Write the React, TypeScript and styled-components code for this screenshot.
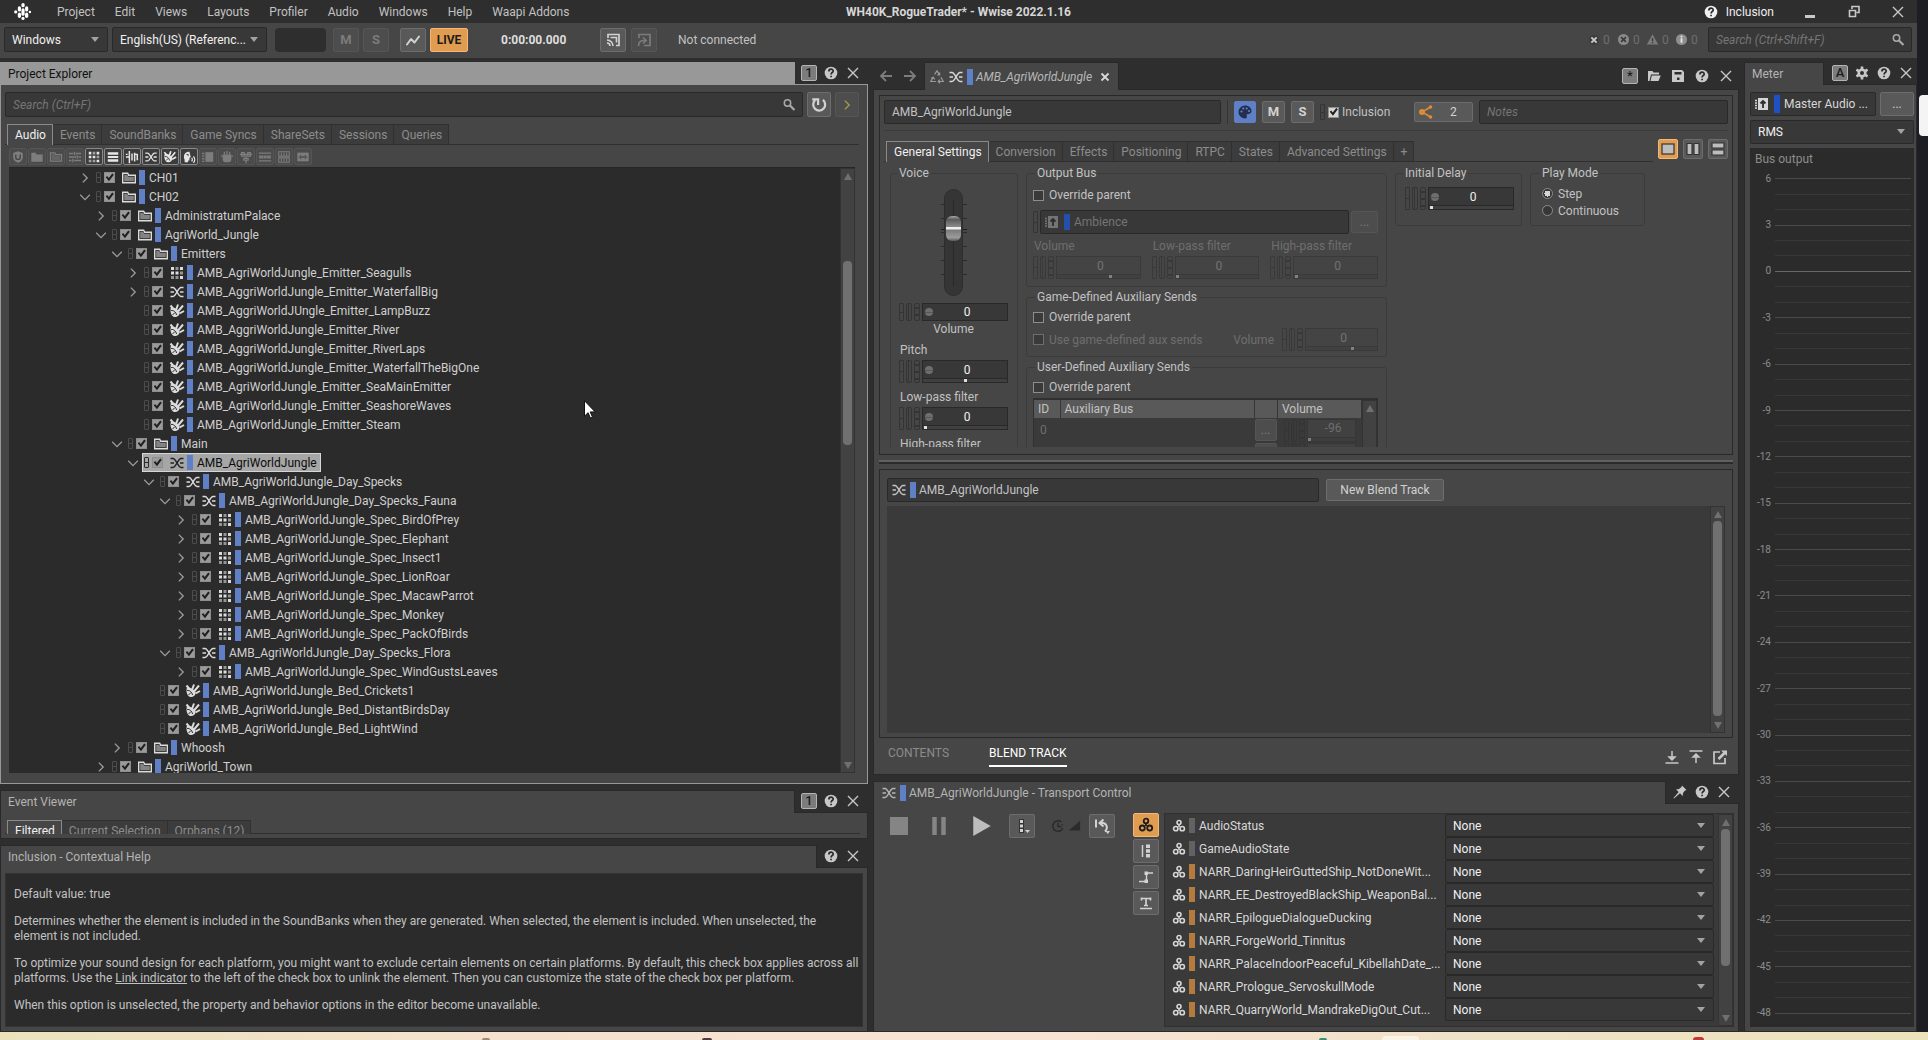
import React from "react";
import styled, { createGlobalStyle, css } from "styled-components";

const c = {
  back: "#2e2e2e",
  panel: "#464646",
  edge: "#292929",
  field: "#383838",
  well: "#2b2b2b",
  tab: "#3c3c3c",
  text: "#c2c2c2",
  bright: "#f0f0f0",
  dim: "#8c8c8c",
  off: "#6e6e6e",
  button: "#595959",
  buttonEdge: "#6d6d6d",
  orange: "#e09c50",
  blue: "#5f80c6",
  focus: "#989898",
};

const Global = createGlobalStyle`
  html, body, #root { height: 100%; }
  body {
    margin: 0;
    overflow: hidden;
    background: ${c.back};
    color: ${c.text};
    font: 12px/16px Roboto, "Open Sans", sans-serif;
  }
  *, *::before, *::after { box-sizing: border-box; }
  button, input, select { font: inherit; color: inherit; margin: 0; border-radius: 0; }
  button { padding: 0; }
  svg { display: block; flex: none; }
`;

/* ---------- icons ---------- */

const line = { fill: "none", stroke: "currentColor", strokeWidth: 1.5 } as const;

const icons: Record<string, React.ReactNode> = {
  logo: (
    <g fill="currentColor">
      <rect x="7" y="0" width="3" height="4" rx="1.5" />
      <rect x="7" y="5" width="3" height="7" rx="1.5" />
      <rect x="7" y="13" width="3" height="3" rx="1.5" />
      <rect x="3.6" y="3" width="3" height="5" rx="1.5" />
      <rect x="3.6" y="9" width="3" height="5" rx="1.5" />
      <rect x="10.4" y="3" width="3" height="5" rx="1.5" />
      <rect x="10.4" y="9" width="3" height="5" rx="1.5" />
      <circle cx="1.6" cy="8.4" r="1.5" />
      <circle cx="15" cy="8.4" r="1.2" />
    </g>
  ),
  help: (
    <>
      <circle cx="8" cy="8" r="6.3" fill="currentColor" />
      <path d="M5.9 6.4c0-3 4.3-3 4.3-.4 0 1.6-2.1 1.5-2.1 3.4M8.1 10.7v1.6" fill="none" stroke="#2a2a2a" strokeWidth="1.7" />
    </>
  ),
  close: <path d="M3 3l10 10M13 3L3 13" {...line} strokeWidth={1.4} />,
  closeSmall: <path d="M4.5 4.5l7 7M11.5 4.5l-7 7" {...line} strokeWidth={1.8} />,
  minimize: <rect x="3" y="11" width="10" height="3" fill="currentColor" />,
  restore: (
    <path d="M6 5V2.5h7v6h-2.5M3.5 6.5h6v6h-6z" {...line} strokeWidth={1.6} />
  ),
  search: (
    <>
      <circle cx="6.5" cy="6" r="3.2" {...line} />
      <path d="M9 8.5l4.5 4.5" {...line} strokeWidth={2.2} />
    </>
  ),
  refresh: (
    <path d="M11.5 3.5a5.3 5.3 0 1 1-7 .3M2 3h5.2v5" {...line} strokeWidth={2} />
  ),
  right: <path d="M5.5 3l5 5-5 5" {...line} strokeWidth={1.6} />,
  down: <path d="M2.5 5.5L8 11l5.5-5.5" {...line} strokeWidth={1.5} />,
  arrowLeft: <path d="M14 8H3M8 3L3 8l5 5" {...line} strokeWidth={1.8} />,
  arrowRight: <path d="M2 8h11M8 3l5 5-5 5" {...line} strokeWidth={1.8} />,
  recycle: (
    <path
      d="M5.6 5.4L8 1.8l2.4 3.6M10.6 3.4v2.4H8.3M12 8.2l2.2 4.3H9.6M11 10.6l-1.8 1.9 1.8 1.9M7 12.5H1.8l2.4-4.2M2.2 9.2l2.2-1 1.2 2.3"
      {...line}
      strokeWidth={1.2}
    />
  ),
  blend: (
    <path
      d="M1.500 3.500h2.500c3 0 5 9 8 9h2.500M1.500 12.500h2.500c3 0 5-9 8-9h2.500M1.500 8h3.500M11 8h3.500"
      {...line}
      strokeWidth={1.500}
    />
  ),
  grid: (
    <g fill="currentColor">
      <path d="M2 2h3v3H2zM11 2h3v3h-3zM2 6.500h3v3H2zM6.500 6.500h3v3h-3zM11 11h3v3h-3z" />
      <path opacity=".6" d="M6.500 2h3v3h-3zM11 6.500h3v3h-3zM2 11h3v3H2zM6.500 11h3v3h-3z" />
    </g>
  ),
  sound: (
    <>
      <path d="M2 4.500c3-.5 6.500 1.500 8.500 4.500.5 3-2 5-5 5C2.500 13.500.5 9 2 4.500z" fill="currentColor" />
      <path d="M7 7l2-5.500M9 8.500l5-6M10.500 10.500l4.500-2.500M1.500 2.500L4 5.500" {...line} strokeWidth={2} />
      <path d="M2 7.500c2.500-.5 5 1.500 5.500 4.500M3.500 12l2.500-2.500" stroke="#2b2b2b" strokeWidth="1" fill="none" />
    </>
  ),
  folder: (
    <>
      <path d="M1.700 3.200h5l1 2h6.600v7.600H1.700z" {...line} strokeWidth={1.400} />
      <path d="M3.200 4.700h3l1 2h5.600v4.600H3.200z" fill="currentColor" opacity=".5" />
    </>
  ),
  folderFull: <path d="M1.500 3h5l1 2h7v8.500h-13z" fill="currentColor" />,
  folderOpen: (
    <path d="M2 13V3h4.500l1 1.600H13v2H5L3.500 13zM5.800 7.600h9L12.500 13h-8z" fill="currentColor" />
  ),
  save: (
    <>
      <path d="M2 2h10l2 2v10H2z" fill="currentColor" />
      <path d="M4.500 4h7v2.500h-7zM7 9.500h2.500V12H7z" fill="#2e2e2e" />
    </>
  ),
  gear: (
    <>
      <circle cx="8" cy="8" r="3.300" {...line} strokeWidth={2.600} />
      <path d="M8 1.500v2.800M8 11.700v2.800M2.400 4.700l2.400 1.400M11.200 9.900l2.400 1.400M2.400 11.300l2.400-1.400M11.200 6.100l2.400-1.400" {...line} strokeWidth={2.600} />
    </>
  ),
  pin: (
    <path d="M10 1.500l4.500 4.500-1.500.5-2 2.500-.3 3L8 9.300 2 14.500 1.500 14 6.700 8 4 5.400l3-.4L9.500 3z" fill="currentColor" />
  ),
  shield: (
    <>
      <path d="M8 1.500l5.500 2v5c0 3-2.500 5-5.500 6-3-1-5.500-3-5.500-6v-5z" fill="currentColor" />
      <path d="M5.500 5v3.500c0 3 5 3 5 0V5" fill="none" stroke="#464646" strokeWidth="1.600" />
    </>
  ),
  mixer: (
    <path d="M1 4h5M9 4h6M1 8h8M12 8h3M1 12h3M7 12h8M7.500 2v4M10.500 6v4M5.500 10v4" {...line} />
  ),
  rows: <path d="M2 2.500h12v3H2zM2 10.500h12v3H2zM2 6.800h12v2.400H2z" fill="currentColor" />,
  switch: (
    <path d="M5 1v14M8 4v8M11 3v10M1 8h4M11 5h3v6h1M1 5h2" {...line} strokeWidth={1.700} />
  ),
  face: (
    <>
      <path d="M3 14V11C.5 6 4 1 8.500 2l1.500 6-1.500 1v3H7v2z" fill="currentColor" />
      <path d="M5 5h2v2" fill="none" stroke="#333" />
      <path d="M11 9c1 1 1 3 0 4M13 7.500c2 2 2 5 0 7" {...line} />
    </>
  ),
  box: (
    <>
      <rect x="5" y="2.500" width="9" height="11" fill="currentColor" />
      <path d="M1 4h3M1 7h3M1 10h3M1 13h3" {...line} />
    </>
  ),
  plug: (
    <>
      <path d="M3 5h10v5c0 2-1 4-3 4H6c-2 0-3-2-3-4z" fill="currentColor" />
      <path d="M5 2v3M8 1v4M11 2v3M1 7h2M13 7h2" {...line} />
    </>
  ),
  duck: <path d="M1 5h14M3 3h3v4H3zM10 3h3v4h-3zM8 5v4M5.500 9.500h5v2h-5zM8 12v3" {...line} />,
  split: <path d="M1 3.500h14M1 12.500h14M2 7h3v2H2zM7 7h2v2H7zM11 7h3v2h-3z" {...line} />,
  dual: <path d="M2 2h12v5H2zM2 9h12v5H2zM5 3v3M8 3v3M11 3v3M5 10v3M8 10v3M11 10v3" {...line} strokeWidth={1.200} />,
  wave: (
    <>
      <rect x="1.500" y="3" width="13" height="10" fill="currentColor" />
      <path d="M3 8h10M5.500 5.500v5M10.500 5.500v5M8 7v2" stroke="#464646" fill="none" />
    </>
  ),
  graph: (
    <path d="M2 12.500L6 7l3.500 3.500L14 4.500" {...line} strokeWidth={2} strokeLinejoin="round" strokeLinecap="round" />
  ),
  cast: (
    <>
      <path d="M3 6V2.500h11v11h-3" {...line} strokeWidth={1.700} />
      <path d="M2 8a6 6 0 0 1 6 6M2 11a3 3 0 0 1 3 3M5.500 5.500h6v5" {...line} strokeWidth={1.600} />
    </>
  ),
  castBack: (
    <>
      <path d="M3 6V2.500h11v11H8" {...line} strokeWidth={1.700} />
      <path d="M2.500 14c0-4 2-6 7-5.500M7 5.500l3.200 3L7 11.500" {...line} strokeWidth={1.600} />
    </>
  ),
  palette: (
    <>
      <path d="M8 1.500c4 0 6.500 2.500 6.500 5.500 0 2-1.500 3-3.500 3-1.500 0-1.500 1-1.200 2 .5 1.500-.3 2.500-1.800 2.500-3.500 0-6.500-3-6.500-6.500S4.500 1.500 8 1.500z" fill="#222f50" />
      <g fill={c.blue}>
        <circle cx="4.500" cy="7.500" r="1.100" />
        <circle cx="6.300" cy="4.500" r="1.100" />
        <circle cx="9.700" cy="4.500" r="1.100" />
        <circle cx="12" cy="7" r="1.100" />
      </g>
    </>
  ),
  share: (
    <>
      <path d="M12.500 3L4 8l8.500 5" fill="none" stroke="#e08a34" strokeWidth="1.500" />
      <circle cx="4" cy="8" r="3" fill="#e08a34" />
      <circle cx="12.500" cy="3" r="1.800" fill="#e08a34" />
      <circle cx="12.500" cy="13" r="1.800" fill="#e08a34" />
    </>
  ),
  bus: (
    <>
      <path d="M4 2h10v12H4z" fill="currentColor" />
      <path d="M1 4.500h2M1 7h2M1 9.500h2M1 12h2" {...line} />
      <path d="M9 12V5M6.500 7.500L9 5l2.500 2.500" fill="none" stroke="#2e2e2e" strokeWidth="1.800" />
    </>
  ),
  toBottom: <path d="M1.500 14h13M8 2v8M5 8l3 3 3-3z" {...line} />,
  toTop: <path d="M1.500 2h13M8 14V6M5 8l3-3 3 3z" {...line} />,
  popOut: (
    <>
      <path d="M8 3H2v11.500h11V9" {...line} strokeWidth={1.700} />
      <path d="M9 1.500h6V7z" fill="currentColor" />
      <path d="M13 3.500L6.500 10" {...line} strokeWidth={2.600} />
    </>
  ),
  state: (
    <g fill="none" stroke="currentColor" strokeWidth="1.800">
      <circle cx="8" cy="4" r="2.300" />
      <circle cx="4.300" cy="11" r="2.500" />
      <circle cx="11.700" cy="11" r="2.500" />
      <path d="M8 6v3" />
    </g>
  ),
  switchGroup: (
    <>
      <path d="M4.500 2v12" {...line} />
      <path d="M8 1.500h4v3.600H8zM8 6.200h4v3.600H8zM8 10.900h4v3.600H8z" fill="currentColor" />
    </>
  ),
  rtpc: (
    <>
      <path d="M1 12.500h7.500V4H15" {...line} strokeWidth={1.400} />
      <path d="M6.500 2.500h3.500V6H6.500zM6.500 10.500h3.500V14H6.500z" fill="currentColor" />
    </>
  ),
  trigger: <path d="M3 3.500h10M8 3v7.500M6 10.500h4M2 13.500h12M3.500 2.500v3M12.500 2.500v3" {...line} strokeWidth={1.700} />,
  stop: <rect x="0" y="0" width="16" height="16" fill="currentColor" />,
  pause: <path d="M2 0h4v16H2zM10 0h4v16h-4z" fill="currentColor" />,
  play: <path d="M1 0l14 8-14 8z" fill="currentColor" />,
  dots: (
    <>
      <path d="M5 1h5v14H5z" fill="#333" />
      <path d="M6 2h3v3H6zM6 6.500h3v3H6zM6 11h3v3H6z" fill="currentColor" />
      <path d="M11 12h5l-2.500 3z" fill="currentColor" />
    </>
  ),
  clock: (
    <path d="M12 3.500a6 6 0 1 0 1.500 7M8 4v4.500h4M10 1v2M13 6v1" {...line} strokeWidth={1.700} />
  ),
  ramp: <path d="M2 13L15 2v11z" fill="currentColor" />,
  undo: (
    <>
      <path d="M2 1.500v8M6 5c6-1 9 4 5 8.500M9.500 1.500L5.500 5l4 3.500" {...line} strokeWidth={2} />
      <path d="M11.500 13h4.500l-2.200 3z" fill="currentColor" />
    </>
  ),
  layout1: <rect x="2" y="3" width="12" height="10" fill="#bdbdbd" stroke="#333" strokeWidth="1.200" />,
  layout2: <path d="M2 2.500h5v11H2zM9 2.500h5v11H9z" fill="#bdbdbd" stroke="#333" strokeWidth="1.200" />,
  layout3: <path d="M2 2h12v5H2zM2 9h12v5H2z" fill="#bdbdbd" stroke="#333" strokeWidth="1.200" />,
  badX: (
    <>
      <circle cx="8" cy="8" r="6.500" fill="#3a3a3a" />
      <path d="M4.500 4.500l7 7M11.500 4.500l-7 7" stroke="#c8c8c8" strokeWidth="2.600" />
    </>
  ),
  errX: (
    <>
      <circle cx="8" cy="8" r="6.800" fill="#8a8a8a" />
      <path d="M5 5l6 6M11 5l-6 6" stroke="#3a3a3a" strokeWidth="2" />
    </>
  ),
  warn: (
    <>
      <path d="M8 1.500l7 12.500H1z" fill="#7a7a7a" />
      <path d="M8 6v4M8 11v1.600" stroke="#3a3a3a" strokeWidth="1.600" />
    </>
  ),
  info: (
    <>
      <circle cx="8" cy="8" r="6.800" fill="#8f8f8f" />
      <path d="M8 3.500v2M8 6.500v5.500" stroke="#e8e8e8" strokeWidth="2.200" />
    </>
  ),
};

const Icon = ({ name, size = 16 }: { name: string; size?: number }) => (
  <svg width={size} height={size} viewBox="0 0 16 16" aria-hidden="true">
    {icons[name]}
  </svg>
);

/* ---------- shared parts ---------- */

const Fill = styled.div`flex: 1;`;

const PlainButton = styled.button`
  display: flex;
  align-items: center;
  justify-content: center;
  width: 16px;
  height: 16px;
  border: 0;
  background: none;
  color: #c8c8c8;
`;

const Badge = styled(PlainButton)`
  border: 1px solid #b4b4b4;
  border-radius: 2px;
  background: #7c7c7c;
  color: #1c1c1c;
  font-size: 13px;
  font-weight: 500;
  line-height: 14px;
`;

const Button = styled.button<{ $w?: number; $h?: number; $tone?: "on" | "off" | "blue" }>`
  display: flex;
  flex: none;
  align-items: center;
  justify-content: center;
  width: ${(p) => (p.$w ? `${p.$w}px` : "auto")};
  height: ${(p) => p.$h ?? 24}px;
  border: 1px solid ${c.buttonEdge};
  border-radius: 2px;
  background: ${c.button};
  color: #d2d2d2;
  ${(p) => p.$tone === "on" && css`
    background: ${c.orange};
    border-color: #f2b878;
    color: #1c1c1c;
    font-weight: 700;
  `}
  ${(p) => p.$tone === "off" && css`
    background: #4d4d4d;
    border-color: #555;
    color: #7b7b7b;
  `}
  ${(p) => p.$tone === "blue" && css`
    background: ${c.blue};
    border-color: ${c.blue};
  `}
`;

const ShareButton = styled(Button)`
  justify-content: flex-start;
  gap: 16px;
  padding-left: 3px;
`;

const Letter = styled.span`
  font-size: 13px;
  font-weight: 700;
`;

const boxed = css`
  border: 1px solid ${c.edge};
  border-radius: 2px;
  background: ${c.field};
`;

const SearchBox = styled.label<{ $w?: number }>`
  ${boxed}
  display: flex;
  flex: ${(p) => (p.$w ? `0 0 ${p.$w}px` : "1")};
  align-items: center;
  height: 25px;
  padding: 0 5px 0 7px;
  color: #a8a8a8;
`;

const Bare = styled.input`
  flex: 1;
  min-width: 0;
  padding: 0;
  border: 0;
  outline: 0;
  background: none;
  &::placeholder { color: #757575; font-style: italic; opacity: 1; }
`;

const TextField = styled.input<{ $w?: number }>`
  ${boxed}
  flex: ${(p) => (p.$w ? `0 0 ${p.$w}px` : "1")};
  min-width: 0;
  height: 24px;
  padding: 0 7px;
  color: ${c.text};
  &::placeholder { color: #757575; font-style: italic; opacity: 1; }
`;

const SelectBox = styled.div<{ $w?: number; $h: number }>`
  position: relative;
  flex: ${(p) => (p.$w ? `0 0 ${p.$w}px` : "1")};
  height: ${(p) => p.$h}px;
  &::after {
    content: "";
    position: absolute;
    right: 9px;
    top: calc(50% - 3px);
    border: 4px solid transparent;
    border-top: 5px solid #a2a2a2;
    border-bottom: 0;
    pointer-events: none;
  }
`;

const Select = styled.select`
  ${boxed}
  appearance: none;
  width: 100%;
  height: 100%;
  padding: 0 7px;
  color: ${c.bright};
`;

const Picker = ({ label, value, w, h = 24, id }: { label?: string; value: string; w?: number; h?: number; id?: string }) => (
  <SelectBox $w={w} $h={h}>
    <Select aria-label={label} id={id}>
      <option>{value}</option>
    </Select>
  </SelectBox>
);

const Tint = styled.i<{ $color?: string; $h?: number }>`
  flex: none;
  width: 6px;
  height: ${(p) => p.$h ?? 16}px;
  background: ${(p) => p.$color ?? c.blue};
`;

const Tabs = styled.div`
  display: flex;
  flex: 1;
  padding-left: 2px;
  border-bottom: 1px solid #2f2f2f;
`;

const Tab = styled.button<{ $on?: boolean }>`
  height: 20px;
  padding: 0 6px 0 7px;
  border: 1px solid #303030;
  border-width: 1px 1px 0 0;
  background: ${c.tab};
  color: ${c.dim};
  ${(p) => p.$on && css`
    position: relative;
    height: 21px;
    margin-bottom: -1px;
    border-color: #8a8a8a;
    border-left-width: 1px;
    background: ${c.panel};
    color: ${c.bright};
  `}
`;

const TabList = ({ names }: { names: string[] }) => (
  <Tabs role="tablist">
    {names.map((n, i) => (
      <Tab key={n} role="tab" $on={i === 0} aria-selected={i === 0}>{n}</Tab>
    ))}
  </Tabs>
);

const ScrollRail = styled.div`
  display: flex;
  flex: 0 0 15px;
  flex-direction: column;
  align-items: center;
  border: 1px solid #333;
  background: #424242;
`;

const ScrollArrow = styled.i<{ $down?: boolean }>`
  flex: none;
  margin: 4px 0 3px;
  border: 4px solid transparent;
  border-top: ${(p) => (p.$down ? "7px solid #707070" : "0")};
  border-bottom: ${(p) => (p.$down ? "0" : "7px solid #707070")};
`;

const ScrollPart = styled.i<{ $grow: number; $thumb?: boolean }>`
  flex: ${(p) => p.$grow} 1 0;
  width: 9px;
  border-radius: 4px;
  background: ${(p) => (p.$thumb ? "#707070" : "transparent")};
`;

const Scroll = ({ before, size, after }: { before: number; size: number; after: number }) => (
  <ScrollRail aria-hidden="true">
    <ScrollArrow />
    <ScrollPart $grow={before} />
    <ScrollPart $grow={size} $thumb={size > 0} />
    <ScrollPart $grow={after} />
    <ScrollArrow $down />
  </ScrollRail>
);

const Check = styled.input.attrs({ type: "checkbox" })<{ $fill?: string }>`
  appearance: none;
  display: grid;
  flex: none;
  place-items: center;
  width: 11px;
  height: 11px;
  border: 1px solid #8d8d8d;
  background: ${(p) => p.$fill ?? "#3a3a3a"};
  &:checked::after {
    content: "";
    width: 9px;
    height: 9px;
    background: #1f1f1f;
    clip-path: polygon(8% 48%, 24% 34%, 42% 56%, 80% 6%, 98% 20%, 44% 92%);
  }
  &:disabled { border-color: #6d6d6d; }
`;

const Radio = styled.input.attrs({ type: "radio" })`
  appearance: none;
  width: 11px;
  height: 11px;
  border: 1px solid #8d8d8d;
  border-radius: 50%;
  background: #363636;
  &:checked { background: radial-gradient(circle, #d4d4d4 0 3px, #363636 3px); }
`;

const CheckLabel = styled.label<{ $off?: boolean }>`
  display: flex;
  align-items: center;
  gap: 5px;
  color: ${(p) => (p.$off ? c.off : c.text)};
`;

const LinkMark = styled.i<{ $h?: number; $color?: string }>`
  --mark: ${(p) => p.$color ?? "#343434"};
  flex: none;
  width: 5px;
  height: ${(p) => p.$h ?? 11}px;
  border: 1px solid var(--mark);
  border-radius: 1px;
  background: linear-gradient(var(--mark), var(--mark)) center / 100% 1px no-repeat;
`;

/* ---------- panel frame ---------- */

const Panel = styled.section<{ $grow?: boolean; $h?: number }>`
  display: flex;
  flex: ${(p) => (p.$grow ? "1 1 0" : `0 0 ${p.$h}px`)};
  flex-direction: column;
  min-height: 0;
  min-width: 0;
`;

const PanelHead = styled.header<{ $h?: number }>`
  display: flex;
  flex: 0 0 ${(p) => p.$h ?? 22}px;
`;

const PanelTitle = styled.h2<{ $focus?: boolean; $narrow?: boolean }>`
  position: relative;
  display: flex;
  flex: ${(p) => (p.$narrow ? "0 0 80px" : "1")};
  align-items: center;
  gap: 3px;
  margin: 0 0 -1px;
  padding: 0 7px;
  border: 1px solid ${(p) => (p.$focus ? c.focus : c.edge)};
  border-bottom: 0;
  background: ${(p) => (p.$focus ? c.focus : c.panel)};
  color: ${(p) => (p.$focus ? "#111" : "#b4b4b4")};
  font-size: 12px;
  font-weight: 400;
`;

const HeadTools = styled.div<{ $gap?: number; $right?: number }>`
  display: flex;
  align-items: center;
  gap: ${(p) => p.$gap ?? 6}px;
  padding: 0 ${(p) => p.$right ?? 7}px 0 6px;
`;

const PanelBody = styled.div<{ $focus?: boolean; $pad: string }>`
  display: flex;
  flex: 1;
  flex-direction: column;
  min-height: 0;
  padding: ${(p) => p.$pad};
  border: 1px solid ${(p) => (p.$focus ? c.focus : c.edge)};
  background: ${c.panel};
`;

const HeadButton = ({ name, label }: { name: string; label: string }) => (
  <PlainButton aria-label={label}><Icon name={name} /></PlainButton>
);

/* ---------- window chrome ---------- */

const Screen = styled.div`
  display: grid;
  grid-template: minmax(0, 1fr) 8px / minmax(0, 1fr) 11px;
  height: 100vh;
`;

const AppWindow = styled.div`
  display: flex;
  flex-direction: column;
  min-height: 0;
  background: ${c.back};
`;

const Behind = styled.div`
  padding: 95px 0 0 2px;
  background: #1c1e24;
`;

const BehindThumb = styled.div`
  height: 41px;
  border-radius: 4px 0 0 4px;
  background: #f4f4f4;
`;

const Taskbar = styled.div`
  position: relative;
  grid-column: 1 / -1;
  background: linear-gradient(90deg, #ebe2bc, #f7e1cf 30%, #f8e2d3 55%, #f0e2c8 75%, #ece2bb);
`;

const TaskTip = styled.i<{ $x: number; $w: number; $color: string; $h: number }>`
  position: absolute;
  bottom: 0;
  left: ${(p) => p.$x}%;
  width: ${(p) => p.$w}px;
  height: ${(p) => p.$h}px;
  border-radius: 3px 3px 0 0;
  background: ${(p) => p.$color};
`;

const MenuBar = styled.div`
  display: grid;
  grid-template-columns: 1fr auto 1fr;
  align-items: center;
  flex: 0 0 23px;
`;

const MenuItems = styled.nav`
  display: flex;
  align-items: center;
  padding-left: 14px;
  color: #fff;
`;

const MenuGap = styled.i`width: 16px;`;

const MenuButton = styled.button`
  padding: 0 10px;
  border: 0;
  background: none;
  color: ${c.text};
`;

const WindowTitle = styled.h1`
  margin: 0;
  color: #d6d6d6;
  font-size: 12px;
  font-weight: 700;
`;

const WindowTools = styled.div`
  display: flex;
  align-items: center;
  justify-content: flex-end;
  gap: 28px;
  padding-right: 11px;
`;

const ContextHelp = styled.span`
  display: flex;
  align-items: center;
  gap: 7px;
  color: ${c.bright};
`;

const ToolBar = styled.div`
  display: flex;
  align-items: flex-start;
  flex: 0 0 35px;
  padding: 4px 5px 0 4px;
  margin-bottom: 4px;
  background: ${c.panel};
`;

const Group = styled.div<{ $gap?: number; $left?: number }>`
  display: flex;
  flex: none;
  gap: ${(p) => p.$gap ?? 4}px;
  margin-left: ${(p) => p.$left ?? 0}px;
  align-items: center;
  min-height: 25px;
`;

const Blank = styled.div`
  width: 51px;
  height: 24px;
  border-radius: 4px;
  background: ${c.back};
`;

const Clock = styled.time`
  width: 68px;
  color: #dedede;
  font-weight: 700;
`;

const Count = styled.span`
  display: flex;
  align-items: center;
  gap: 3px;
  width: 29px;
  color: ${c.off};
`;

const Main = styled.main`
  display: grid;
  flex: 1;
  grid-template-columns: minmax(0, 868fr) minmax(0, 866fr) 173px;
  gap: 5px;
  min-height: 0;
`;

const Column = styled.div`
  display: flex;
  flex-direction: column;
  gap: 6px;
  min-width: 0;
  min-height: 0;
`;

/* ---------- project explorer ---------- */

const SearchRow = styled.div`
  display: flex;
  gap: 4px;
  margin-bottom: 7px;
`;

const FixedRow = styled.div<{ $h: number }>`
  display: flex;
  flex: 0 0 ${(p) => p.$h}px;
  overflow: hidden;
`;

const ToolIcons = styled.div`
  display: flex;
  flex: none;
  gap: 1px;
  padding: 3px 0 2px 4px;
`;

const ToolIcon = styled.button<{ $on: boolean }>`
  display: grid;
  place-items: center;
  width: 18px;
  height: 17px;
  border: 1px solid ${(p) => (p.$on ? "#8a8a8a" : "#555")};
  border-radius: 2px;
  background: ${(p) => (p.$on ? "#3c3c3c" : "#4b4b4b")};
  color: ${(p) => (p.$on ? "#e6e6e6" : "#7d7d7d")};
`;

const TreeFrame = styled.div`
  display: flex;
  flex: 1;
  min-height: 0;
  margin: 0 4px;
  border-top: 1px solid #262626;
  background: ${c.well};
  overflow: hidden;
`;

const Tree = styled.div`
  flex: 1;
  min-width: 0;
`;

const TreeRow = styled.div<{ $level: number }>`
  display: flex;
  align-items: center;
  height: 19px;
  padding-left: ${(p) => 68 + p.$level * 16}px;
`;

const Expander = styled.button`
  display: grid;
  place-items: center;
  width: 16px;
  height: 16px;
  border: 0;
  background: none;
  color: #9a9a9a;
`;

const NodeLabel = styled.label<{ $on?: boolean }>`
  display: flex;
  align-items: center;
  height: 19px;
  margin-left: 1px;
  padding: 0 3px 0 1px;
  border: 1px solid transparent;
  color: #cfcfcf;
  ${(p) => p.$on && css`
    border-color: #d6d6d6;
    background: #a6a6a6;
    color: #0c0c0c;
  `}
`;

const NodeCheck = styled(Check)`
  margin: 0 6px 0 3px;
  background: #9a9a9a;
`;

const NodeIcon = styled.span<{ $on?: boolean }>`
  margin-right: 2px;
  color: ${(p) => (p.$on ? "#222" : "#dcdcdc")};
`;

const NodeText = styled.span`margin-left: 4px; white-space: nowrap;`;

const Olive = styled.span`color: #a8984a;`;

type Node = [level: number, icon: string, text: string, open?: "open" | "shut"];

const P = "AMB_AgriWorldJungle";
const G = "AMB_AggriWorldJungle_Emitter_";

const nodes: Node[] = [
  [0, "folder", "CH01", "shut"],
  [0, "folder", "CH02", "open"],
  [1, "folder", "AdministratumPalace", "shut"],
  [1, "folder", "AgriWorld_Jungle", "open"],
  [2, "folder", "Emitters", "open"],
  [3, "grid", `${P}_Emitter_Seagulls`, "shut"],
  [3, "blend", `${G}WaterfallBig`, "shut"],
  [3, "sound", "AMB_AggriWorldJUngle_Emitter_LampBuzz"],
  [3, "sound", `${G}River`],
  [3, "sound", `${G}RiverLaps`],
  [3, "sound", `${G}WaterfallTheBigOne`],
  [3, "sound", `${P}_Emitter_SeaMainEmitter`],
  [3, "sound", `${P}_Emitter_SeashoreWaves`],
  [3, "sound", `${P}_Emitter_Steam`],
  [2, "folder", "Main", "open"],
  [3, "blend", P, "open"],
  [4, "blend", `${P}_Day_Specks`, "open"],
  [5, "blend", `${P}_Day_Specks_Fauna`, "open"],
  [6, "grid", `${P}_Spec_BirdOfPrey`, "shut"],
  [6, "grid", `${P}_Spec_Elephant`, "shut"],
  [6, "grid", `${P}_Spec_Insect1`, "shut"],
  [6, "grid", `${P}_Spec_LionRoar`, "shut"],
  [6, "grid", `${P}_Spec_MacawParrot`, "shut"],
  [6, "grid", `${P}_Spec_Monkey`, "shut"],
  [6, "grid", `${P}_Spec_PackOfBirds`, "shut"],
  [5, "blend", `${P}_Day_Specks_Flora`, "open"],
  [6, "grid", `${P}_Spec_WindGustsLeaves`, "shut"],
  [4, "sound", `${P}_Bed_Crickets1`],
  [4, "sound", `${P}_Bed_DistantBirdsDay`],
  [4, "sound", `${P}_Bed_LightWind`],
  [2, "folder", "Whoosh", "shut"],
  [1, "folder", "AgriWorld_Town", "shut"],
];

const toolIcons: [string, boolean][] = [
  ["shield", false], ["folderFull", false], ["folder", false], ["mixer", false],
  ["grid", true], ["rows", true], ["switch", true], ["blend", true], ["sound", true], ["face", true],
  ["box", false], ["plug", false], ["duck", false], ["split", false], ["dual", false], ["wave", false],
];

const Explorer = () => (
  <Panel $grow>
    <PanelHead>
      <PanelTitle $focus>Project Explorer</PanelTitle>
      <HeadTools>
        <Badge>1</Badge>
        <HeadButton name="help" label="Help" />
        <HeadButton name="close" label="Close" />
      </HeadTools>
    </PanelHead>
    <PanelBody $focus $pad="7px 8px 10px 4px">
      <SearchRow>
        <SearchBox>
          <Bare placeholder="Search (Ctrl+F)" aria-label="Search project" />
          <Icon name="search" />
        </SearchBox>
        <Button $w={24} $h={25} aria-label="Refresh"><Icon name="refresh" size={18} /></Button>
        <Button $w={24} $h={25} $tone="off" aria-label="Go">
          <Olive><Icon name="right" size={14} /></Olive>
        </Button>
      </SearchRow>
      <FixedRow $h={21}>
        <TabList names={["Audio", "Events", "SoundBanks", "Game Syncs", "ShareSets", "Sessions", "Queries"]} />
      </FixedRow>
      <ToolIcons>
        {toolIcons.map(([name, on]) => (
          <ToolIcon key={name} $on={on} aria-label={name}><Icon name={name} size={14} /></ToolIcon>
        ))}
      </ToolIcons>
      <TreeFrame>
        <Tree role="tree">
          {nodes.map(([level, icon, text, open]) => {
            const on = text === P;
            return (
              <TreeRow key={text} role="treeitem" aria-selected={on} $level={level}>
                <Expander as={open ? "button" : "span"} aria-label={open && (open === "open" ? "Collapse" : "Expand")}>
                  {open && <Icon name={open === "open" ? "down" : "right"} size={14} />}
                </Expander>
                <NodeLabel $on={on}>
                  <LinkMark $color={on ? "#2b2b2b" : "#4c4c4c"} />
                  <NodeCheck defaultChecked />
                  <NodeIcon $on={on}><Icon name={icon} /></NodeIcon>
                  <Tint $h={15} />
                  <NodeText>{text}</NodeText>
                </NodeLabel>
              </TreeRow>
            );
          })}
        </Tree>
        <Scroll before={78} size={184} after={314} />
      </TreeFrame>
    </PanelBody>
  </Panel>
);

const HelpText = styled.div`
  flex: 1;
  padding: 13px 0 0 8px;
  border: 1px solid #333;
  background: ${c.well};
  line-height: 15px;
  p { margin: 0 0 12px; }
  p:last-child { margin-bottom: 0; }
  a { color: inherit; }
`;

const EventViewer = () => (
  <Panel $h={49}>
    <PanelHead>
      <PanelTitle>Event Viewer</PanelTitle>
      <HeadTools>
        <Badge>1</Badge>
        <HeadButton name="help" label="Help" />
        <HeadButton name="close" label="Close" />
      </HeadTools>
    </PanelHead>
    <PanelBody $pad="7px 7px 0 4px">
      <FixedRow $h={14}>
        <TabList names={["Filtered", "Current Selection", "Orphans (12)"]} />
      </FixedRow>
    </PanelBody>
  </Panel>
);

const Contextual = () => (
  <Panel $h={187}>
    <PanelHead>
      <PanelTitle>Inclusion - Contextual Help</PanelTitle>
      <HeadTools>
        <HeadButton name="help" label="Help" />
        <HeadButton name="close" label="Close" />
      </HeadTools>
    </PanelHead>
    <PanelBody $pad="5px 4px 4px">
      <HelpText>
        <p>Default value: true</p>
        <p>
          Determines whether the element is included in the SoundBanks when they are generated. When selected, the
          element is included. When unselected, the element is not included.
        </p>
        <p>
          To optimize your sound design for each platform, you might want to exclude certain elements on certain
          platforms. By default, this check box applies across all platforms. Use the <a href="#link">Link indicator</a>{" "}
          to the left of the check box to unlink the element. Then you can customize the state of the check box per
          platform.
        </p>
        <p>When this option is unselected, the property and behavior options in the editor become unavailable.</p>
      </HelpText>
    </PanelBody>
  </Panel>
);

/* ---------- property editor ---------- */

const Nav = styled.div`
  display: flex;
  align-items: center;
  gap: 8px;
  width: 51px;
  padding-left: 5px;
  & > button { color: #7c7c7c; }
`;

const DocTab = styled.div`
  position: relative;
  display: flex;
  align-items: center;
  gap: 3px;
  margin-bottom: -1px;
  padding: 0 5px 0 4px;
  border: 1px solid ${c.edge};
  border-bottom: 0;
  background: ${c.panel};
  color: #d8d8d8;
  svg:first-child { color: #9a9a9a; }
  button svg:first-child { color: #d8d8d8; }
  em { color: #b8b8b8; margin-right: 2px; }
`;

const Framed = styled.div<{ $grow?: boolean; $h?: number; $pad: string }>`
  display: flex;
  flex: ${(p) => (p.$grow ? "1 1 0" : `0 0 ${p.$h}px`)};
  flex-direction: column;
  min-height: 0;
  padding: ${(p) => p.$pad};
  border: 1px solid ${c.edge};
  overflow: hidden;
`;

const NameRow = styled.div`
  display: flex;
  align-items: center;
  gap: 6px;
  padding-bottom: 6px;
  border-bottom: 1px solid #3a3a3a;
`;

const Rule = styled.i`
  width: 1px;
  height: 24px;
  background: #343434;
`;

const InclusionGroup = styled.label`
  display: flex;
  align-items: center;
  gap: 3px;
  width: 88px;
`;

const TabRow = styled.div`
  display: flex;
  align-items: flex-end;
  flex: 0 0 21px;
  gap: 5px;
  margin: 10px 0 3px;
`;

const ViewButtons = styled.div`
  display: flex;
  gap: 5px;
  align-self: flex-start;
  margin-top: -2px;
`;

const Properties = styled.div`
  display: flex;
  flex: 1;
  align-items: flex-start;
  gap: 8px;
  min-height: 0;
  padding-left: 6px;
  overflow: hidden;
`;

const Box = styled.fieldset<{ $w?: number; $pad?: string }>`
  flex: none;
  min-width: 0;
  width: ${(p) => (p.$w ? `${p.$w}px` : "auto")};
  margin: 0;
  padding: ${(p) => p.$pad ?? "4px 8px 5px 6px"};
  border: 1px solid #3b3b3b;
  border-radius: 3px;
  legend { margin-left: -2px; padding: 0 2px; }
`;

const Stack = styled.div`
  display: flex;
  flex: 0 0 361px;
  flex-direction: column;
  gap: 2px;
  legend { margin-left: 2px; }
`;

const Pip = styled.i<{ $kind: "rtpc" | "state" }>`
  flex: none;
  width: 6px;
  border: 1px solid #343434;
  border-radius: 2px;
  background: ${(p) =>
    p.$kind === "rtpc"
      ? "linear-gradient(90deg, transparent 1px, #343434 1px 2px, transparent 2px)"
      : "repeating-linear-gradient(transparent 0 3px, #343434 3px 5px, transparent 5px 7px)"};
`;

const SpinRow = styled.div<{ $off?: boolean; $h: number }>`
  display: flex;
  align-items: stretch;
  gap: 2px;
  flex: 1;
  min-width: 0;
  height: ${(p) => p.$h}px;
  opacity: ${(p) => (p.$off ? 0.7 : 1)};
`;

const SpinBox = styled.div<{ $off?: boolean }>`
  display: flex;
  flex: 1;
  flex-direction: column;
  min-width: 0;
  border: 1px solid ${(p) => (p.$off ? "#363636" : c.edge)};
  background: ${(p) => (p.$off ? "#444" : c.field)};
`;

const SpinValue = styled.div`
  display: flex;
  flex: 1;
  align-items: center;
  padding-left: 2px;
`;

const Knob = styled.i<{ $hidden?: boolean }>`
  width: 8px;
  height: 8px;
  border-radius: 50%;
  background: ${(p) => (p.$hidden ? "transparent" : "linear-gradient(#6e6e6e 45%, #585858 45% 60%, #6e6e6e 60%)")};
`;

const SpinInput = styled.input<{ $off?: boolean }>`
  flex: 1;
  min-width: 0;
  height: 16px;
  padding: 0 6px 0 0;
  border: 0;
  outline: 0;
  background: none;
  color: ${(p) => (p.$off ? "#858585" : c.bright)};
  text-align: center;
`;

const SpinTrack = styled.div<{ $off?: boolean }>`
  display: flex;
  height: 4px;
  border-top: 1px solid ${(p) => (p.$off ? "#363636" : c.edge)};
  background: #404040;
`;

const SpinMark = styled.i<{ $off?: boolean }>`
  width: 3px;
  height: 3px;
  background: ${(p) => (p.$off ? "#9a9a9a" : "#e0e0e0")};
`;

const Spin = ({ label, at, off, value = "0" }: { label: string; at?: number; off?: boolean; value?: string }) => (
  <SpinRow $off={off} $h={at === undefined ? 18 : 23}>
    <LinkMark $h={at === undefined ? 18 : 23} />
    <Pip $kind="rtpc" />
    <Pip $kind="state" />
    <SpinBox $off={off}>
      <SpinValue>
        <Knob $hidden={off} />
        <SpinInput $off={off} aria-label={label} defaultValue={value} disabled={off} />
      </SpinValue>
      {at !== undefined && (
        <SpinTrack $off={off}>
          <SpinMark $off={off} style={{ marginLeft: `${at}%` }} />
        </SpinTrack>
      )}
    </SpinBox>
  </SpinRow>
);

const Caption = styled.div<{ $off?: boolean; $center?: boolean }>`
  color: ${(p) => (p.$off ? c.off : c.text)};
  text-align: ${(p) => (p.$center ? "center" : "left")};
`;

const Named = styled.div<{ $top?: number }>`
  display: flex;
  flex-direction: column;
  gap: 2px;
  margin-top: ${(p) => p.$top ?? 4}px;
  & > :first-child { padding-left: 1px; }
  & > :last-child { flex: none; }
`;

const FaderArea = styled.div`
  display: flex;
  justify-content: center;
  margin: 3px 0 7px;
`;

const Fader = styled.div`
  display: flex;
  justify-content: center;
  width: 26px;
  height: 107px;
  background:
    linear-gradient(#1c1c1c, #1c1c1c) 0 40px / 26px 1px no-repeat,
    repeating-linear-gradient(transparent 0 13px, #2b2b2b 13px 14px) 0 2px / 26px 93px no-repeat;
`;

const FaderInput = styled.input.attrs({ type: "range" })`
  appearance: none;
  writing-mode: vertical-lr;
  direction: rtl;
  width: 19px;
  height: 107px;
  border: 1px solid #2d2d2d;
  border-radius: 10px;
  background: linear-gradient(#292929, #292929) center / 1px 86px no-repeat, #353535;
  &::-webkit-slider-thumb {
    appearance: none;
    width: 15px;
    height: 25px;
    border-radius: 6px;
    background: linear-gradient(#a6a6a6, #5c5c5c 14%, #8c8c8c 44%, #efefef 46% 53%, #7a7a7a 55%, #9b9b9b 86%, #585858);
  }
`;

const Line = styled.div<{ $top?: number; $gap?: number }>`
  display: flex;
  align-items: center;
  gap: ${(p) => p.$gap ?? 2}px;
  margin-top: ${(p) => p.$top ?? 0}px;
`;

const BusField = styled.div<{ $off?: boolean }>`
  ${boxed}
  display: flex;
  flex: 1;
  align-items: center;
  gap: 4px;
  min-width: 0;
  height: 24px;
  padding: 0 3px;
  white-space: nowrap;
  color: ${(p) => (p.$off ? "#747474" : "#d6d6d6")};
`;

const Filters = styled.div`
  display: grid;
  grid-template-columns: repeat(3, minmax(0, 1fr));
  gap: 11px;
`;

const NarrowSpin = styled.div`
  display: flex;
  flex: none;
  width: 96px;
  margin-left: 6px;
`;

const AuxFrame = styled.div`
  display: flex;
  height: 80px;
  margin-top: 3px;
  border: 1px solid #303030;
  border-top-width: 2px;
`;

const AuxView = styled.div`
  flex: 1;
  min-width: 0;
  background: #3a3a3a;
`;

const AuxTable = styled.table`
  width: 100%;
  border-collapse: collapse;
  table-layout: fixed;
  th {
    height: 18px;
    padding: 0 4px;
    border-right: 1px solid #363636;
    background: ${c.button};
    font-weight: 400;
    text-align: left;
    white-space: nowrap;
  }
  td {
    height: 24px;
    padding: 0 6px;
    color: ${c.off};
  }
  td.tight { padding: 0; }
`;

const RadioLabel = styled(CheckLabel)`height: 17px;`;

const Splitter = styled.hr`
  flex: none;
  height: 4px;
  margin: 5px 0;
  border: 0;
  border-top: 2px solid #606060;
  border-bottom: 2px solid #2b2b2b;
`;

const BlendCanvas = styled.div`
  display: flex;
  flex: 1;
  justify-content: flex-end;
  margin: 4px 4px 0 0;
  background: #3a3a3a;
`;

const BlendName = styled(BusField)`
  flex: 0 1 432px;
  gap: 3px;
  color: ${c.text};
`;

const SubTabs = styled.div`
  display: flex;
  align-items: flex-start;
  flex: 0 0 36px;
  padding: 5px 5px 0 9px;
`;

const SubTab = styled.button<{ $on?: boolean }>`
  height: 24px;
  margin-right: 40px;
  padding: 0 0 3px;
  border: 0;
  border-bottom: 2px solid ${(p) => (p.$on ? "#fff" : "transparent")};
  background: none;
  color: ${(p) => (p.$on ? "#fff" : c.dim)};
`;

const SubTools = styled.div`
  display: flex;
  gap: 8px;
  padding-top: 6px;
`;

const Editor = () => (
  <Panel $grow>
    <PanelHead $h={27}>
      <Nav>
        <HeadButton name="arrowLeft" label="Back" />
        <HeadButton name="arrowRight" label="Forward" />
      </Nav>
      <DocTab>
        <Icon name="recycle" />
        <Icon name="blend" />
        <Tint />
        <em>{P}</em>
        <HeadButton name="closeSmall" label="Close tab" />
      </DocTab>
      <Fill />
      <HeadTools $gap={8} $right={5}>
        <Badge>*</Badge>
        <HeadButton name="folderOpen" label="Open" />
        <HeadButton name="save" label="Save" />
        <HeadButton name="help" label="Help" />
        <HeadButton name="close" label="Close" />
      </HeadTools>
    </PanelHead>
    <PanelBody $pad="5px 5px 0">
      <Framed $h={360} $pad="4px 4px 7px 4px">
        <NameRow>
          <TextField defaultValue={P} aria-label="Name" />
          <Rule />
          <Button $w={22} $h={22} $tone="blue" aria-label="Colour"><Icon name="palette" /></Button>
          <Button $w={23} $h={22}><Letter>M</Letter></Button>
          <Button $w={23} $h={22}><Letter>S</Letter></Button>
          <InclusionGroup>
            <LinkMark $h={16} />
            <Check defaultChecked $fill="#d6d6d6" />
            Inclusion
          </InclusionGroup>
          <ShareButton $w={59} $h={20}><Icon name="share" />2</ShareButton>
          <TextField $w={249} placeholder="Notes" aria-label="Notes" />
        </NameRow>
        <TabRow>
          <TabList names={["General Settings", "Conversion", "Effects", "Positioning", "RTPC", "States", "Advanced Settings", "+"]} />
          <ViewButtons>
            <Button $w={20} $h={20} $tone="on" aria-label="Single view"><Icon name="layout1" /></Button>
            <Button $w={20} $h={20} aria-label="Two columns"><Icon name="layout2" /></Button>
            <Button $w={20} $h={20} aria-label="Two rows"><Icon name="layout3" /></Button>
          </ViewButtons>
        </TabRow>
        <Properties>
          <Box $w={128} $pad="5px 9px 6px 8px">
            <legend>Voice</legend>
            <FaderArea>
              <Fader><FaderInput defaultValue={67} aria-label="Voice volume fader" /></Fader>
            </FaderArea>
            <Line><Spin label="Voice volume" /></Line>
            <Caption $center>Volume</Caption>
            <Named $top={5}><Caption>Pitch</Caption><Spin label="Pitch" at={49} /></Named>
            <Named $top={6}><Caption>Low-pass filter</Caption><Spin label="Voice low-pass" at={1} /></Named>
            <Named $top={6}><Caption>High-pass filter</Caption><Spin label="Voice high-pass" at={1} /></Named>
          </Box>
          <Stack>
            <Box $pad="6px 8px 7px 6px">
              <legend>Output Bus</legend>
              <CheckLabel><Check />Override parent</CheckLabel>
              <Line $top={7}>
                <LinkMark $h={22} />
                <BusField $off>
                  <Icon name="bus" /><Tint $color="#2450ac" />Ambience
                </BusField>
                <Button $w={27} $h={22} $tone="off">...</Button>
              </Line>
              <Filters>
                <Named><Caption $off>Volume</Caption><Spin off label="Bus volume" at={63} /></Named>
                <Named><Caption $off>Low-pass filter</Caption><Spin off label="Bus low-pass" at={1} /></Named>
                <Named><Caption $off>High-pass filter</Caption><Spin off label="Bus high-pass" at={1} /></Named>
              </Filters>
            </Box>
            <Box>
              <legend>Game-Defined Auxiliary Sends</legend>
              <CheckLabel><Check />Override parent</CheckLabel>
              <Line $top={3}>
                <CheckLabel $off><Check disabled />Use game-defined aux sends</CheckLabel>
                <Fill />
                <Caption $off>Volume</Caption>
                <NarrowSpin><Spin off label="Aux volume" at={63} /></NarrowSpin>
              </Line>
            </Box>
            <Box>
              <legend>User-Defined Auxiliary Sends</legend>
              <CheckLabel><Check />Override parent</CheckLabel>
              <AuxFrame>
                <AuxView>
                  <AuxTable>
                    <colgroup>
                      <col width="26" /><col /><col width="23" /><col width="84" />
                    </colgroup>
                    <thead><tr><th>ID</th><th>Auxiliary Bus</th><th /><th>Volume</th></tr></thead>
                    <tbody>
                      {[0, 1].map((id) => (
                        <tr key={id}>
                          <td>{id}</td>
                          <td />
                          <td className="tight"><Button $w={22} $h={22} $tone="off">...</Button></td>
                          <td><Spin off label={`Send ${id}`} at={1} value="-96" /></td>
                        </tr>
                      ))}
                    </tbody>
                  </AuxTable>
                </AuxView>
                <Scroll before={1} size={0} after={1} />
              </AuxFrame>
            </Box>
          </Stack>
          <Box $w={127} $pad="6px 7px 15px 9px">
            <legend>Initial Delay</legend>
            <Line><Spin label="Initial delay" at={1} /></Line>
          </Box>
          <Box $w={115} $pad="4px 8px 6px 11px">
            <legend>Play Mode</legend>
            <RadioLabel><Radio name="mode" defaultChecked />Step</RadioLabel>
            <RadioLabel><Radio name="mode" />Continuous</RadioLabel>
          </Box>
        </Properties>
      </Framed>
      <Splitter />
      <Framed $grow $pad="8px 3px 4px 7px">
        <Line $gap={7}>
          <BlendName>
            <Icon name="blend" /><Tint />
            <Bare defaultValue={P} aria-label="Blend container" />
          </BlendName>
          <Button $w={118} $h={22}>New Blend Track</Button>
        </Line>
        <BlendCanvas><Scroll before={0} size={194} after={2} /></BlendCanvas>
      </Framed>
      <SubTabs>
        <SubTab>CONTENTS</SubTab>
        <SubTab $on>BLEND TRACK</SubTab>
        <Fill />
        <SubTools>
          <HeadButton name="toBottom" label="Dock below" />
          <HeadButton name="toTop" label="Dock above" />
          <HeadButton name="popOut" label="Float" />
        </SubTools>
      </SubTabs>
    </PanelBody>
  </Panel>
);

/* ---------- transport ---------- */

const TransportGrid = styled.div`
  display: grid;
  flex: 1;
  grid-template-columns: 250px 26px minmax(0, 1fr);
  gap: 5px;
  min-height: 0;
`;

const Controls = styled.div`
  display: flex;
  align-items: center;
  height: 26px;
  padding-left: 12px;
`;

const Ctl = styled(PlainButton)<{ $right: number; $tone?: string }>`
  width: 18px;
  height: 18px;
  margin-right: ${(p) => p.$right}px;
  color: ${(p) => p.$tone ?? "#858585"};
`;

const Dark = styled.span`
  display: flex;
  align-items: center;
  gap: 2px;
  margin: 0 8px 0 16px;
  color: #2b2b2b;
`;

const SideTabs = styled.div`
  display: flex;
  flex-direction: column;
  gap: 2px;
`;

const StateFrame = styled.div`
  display: flex;
  min-height: 0;
  border: 1px solid #303030;
  background: #3a3a3a;
  overflow: hidden;
`;

const StateList = styled.ul`
  flex: 1;
  min-width: 0;
  margin: 0;
  padding: 0 4px 0 7px;
  list-style: none;
`;

const StateRow = styled.li`
  display: flex;
  align-items: center;
  height: 23px;
  color: #d8d8d8;
`;

const StateName = styled.label`
  display: flex;
  flex: 0 0 273px;
  align-items: center;
  gap: 3px;
  overflow: hidden;
  white-space: nowrap;
  ${Tint} { margin-right: 1px; }
`;

const states: [string, boolean][] = [
  ["AudioStatus", false],
  ["GameAudioState", false],
  ["NARR_DaringHeirGuttedShip_NotDoneWit...", true],
  ["NARR_EE_DestroyedBlackShip_WeaponBal...", true],
  ["NARR_EpilogueDialogueDucking", true],
  ["NARR_ForgeWorld_Tinnitus", true],
  ["NARR_PalaceIndoorPeaceful_KibellahDate_...", true],
  ["NARR_Prologue_ServoskullMode", true],
  ["NARR_QuarryWorld_MandrakeDigOut_Cut...", true],
];

const Transport = () => (
  <Panel $h={251}>
    <PanelHead>
      <PanelTitle>
        <Icon name="blend" />
        <Tint />
        {P} - Transport Control
      </PanelTitle>
      <HeadTools>
        <HeadButton name="pin" label="Pin" />
        <HeadButton name="help" label="Help" />
        <HeadButton name="close" label="Close" />
      </HeadTools>
    </PanelHead>
    <PanelBody $pad="9px 4px 4px 4px">
      <TransportGrid>
        <Controls>
          <Ctl $right={22} aria-label="Stop"><Icon name="stop" size={18} /></Ctl>
          <Ctl $right={25} aria-label="Pause"><Icon name="pause" size={18} /></Ctl>
          <Ctl $right={18} $tone="#bdbdbd" aria-label="Play"><Icon name="play" size={20} /></Ctl>
          <Button $w={26} $h={24} aria-label="Options"><Icon name="dots" /></Button>
          <Dark><Icon name="clock" size={14} /><Icon name="ramp" size={14} /></Dark>
          <Button $w={26} $h={24} aria-label="Reset"><Icon name="undo" /></Button>
        </Controls>
        <SideTabs>
          <Button $w={26} $h={24} $tone="on" aria-label="States"><Icon name="state" /></Button>
          <Button $w={26} $h={24} aria-label="Switches"><Icon name="switchGroup" /></Button>
          <Button $w={26} $h={24} aria-label="Parameters"><Icon name="rtpc" /></Button>
          <Button $w={26} $h={24} aria-label="Triggers"><Icon name="trigger" /></Button>
        </SideTabs>
        <StateFrame>
          <StateList>
            {states.map(([name, orange]) => (
              <StateRow key={name}>
                <StateName htmlFor={name}>
                  <Icon name="state" size={14} />
                  <Tint $color={orange ? "#b57a3e" : "#626262"} $h={15} />
                  {name}
                </StateName>
                <Picker id={name} value="None" h={23} />
              </StateRow>
            ))}
          </StateList>
          <Scroll before={0} size={139} after={45} />
        </StateFrame>
      </TransportGrid>
    </PanelBody>
  </Panel>
);

/* ---------- meter ---------- */

const MeterWell = styled.div`
  display: flex;
  flex: 1;
  flex-direction: column;
  min-height: 0;
  margin-top: 4px;
  padding: 3px 3px 6px 5px;
  background: ${c.well};
  color: ${c.dim};
`;

const Scale = styled.div`
  display: flex;
  flex: 1;
  flex-direction: column;
  margin-top: 4px;
`;

const Step = styled.div<{ $tone: string }>`
  display: flex;
  flex: 1 1 0;
  align-items: center;
  gap: 4px;
  min-height: 0;
  font-size: 10px;
  line-height: 12px;
  span { width: 16px; text-align: right; }
  i { flex: 1; height: 1px; background: ${(p) => p.$tone}; }
`;

const MeterSelect = styled.div`
  display: flex;
  flex: none;
  margin-top: 4px;
`;

const steps = Array.from({ length: 55 }, (_, i) => 6 - i);

const Meter = () => (
  <Panel $grow>
    <PanelHead>
      <PanelTitle $narrow>Meter</PanelTitle>
      <Fill />
      <HeadTools $right={3}>
        <Badge>A</Badge>
        <HeadButton name="gear" label="Settings" />
        <HeadButton name="help" label="Help" />
        <HeadButton name="close" label="Close" />
      </HeadTools>
    </PanelHead>
    <PanelBody $pad="7px 2px 4px 5px">
      <Line $gap={4}>
        <BusField><Icon name="bus" /><Tint $color="#1f50c4" $h={18} />Master Audio ...</BusField>
        <Button $w={34} $h={24}>...</Button>
      </Line>
      <MeterSelect><Picker label="Meter type" value="RMS" h={24} /></MeterSelect>
      <MeterWell>
        Bus output
        <Scale>
          {steps.map((n) => (
            <Step key={n} $tone={n === 0 ? "#686868" : n % 3 === 0 ? "#4b4b4b" : "#383838"}>
              <span>{n % 3 === 0 ? n : ""}</span>
              <i />
            </Step>
          ))}
        </Scale>
      </MeterWell>
    </PanelBody>
  </Panel>
);

const Pointer = styled.svg`
  position: fixed;
  left: 30.3%;
  top: 38.5%;
`;

export default function App() {
  return (
    <Screen>
      <Global />
      <AppWindow>
        <MenuBar>
          <MenuItems>
            <Icon name="logo" size={17} />
            <MenuGap />
            {["Project", "Edit", "Views", "Layouts", "Profiler", "Audio", "Windows", "Help", "Waapi Addons"].map((m) => (
              <MenuButton key={m}>{m}</MenuButton>
            ))}
          </MenuItems>
          <WindowTitle>WH40K_RogueTrader* - Wwise 2022.1.16</WindowTitle>
          <WindowTools>
            <ContextHelp><Icon name="help" />Inclusion</ContextHelp>
            <HeadButton name="minimize" label="Minimize" />
            <HeadButton name="restore" label="Restore" />
            <HeadButton name="close" label="Close window" />
          </WindowTools>
        </MenuBar>
        <ToolBar>
          <Group>
            <Picker label="Platform" value="Windows" w={104} h={25} />
            <Picker label="Language" value="English(US) (Referenc..." w={155} h={25} />
          </Group>
          <Group $left={8}><Blank /></Group>
          <Group $left={7}>
            <Button $w={26} $tone="off"><Letter>M</Letter></Button>
            <Button $w={26} $tone="off"><Letter>S</Letter></Button>
          </Group>
          <Group $left={11}>
            <Button $w={26} aria-label="Profile"><Icon name="graph" /></Button>
            <Button $w={38} $tone="on">LIVE</Button>
          </Group>
          <Group $left={33}><Clock>0:00:00.000</Clock></Group>
          <Group $left={31} $gap={5}>
            <Button $w={26} aria-label="Connect"><Icon name="cast" /></Button>
            <Button $w={26} $tone="off" aria-label="Reconnect"><Icon name="castBack" /></Button>
          </Group>
          <Group $left={21}>Not connected</Group>
          <Fill />
          <Group $gap={0}>
            <Count><Icon name="badX" size={12} />0</Count>
            <Count><Icon name="errX" size={13} />0</Count>
            <Count><Icon name="warn" size={13} />0</Count>
            <Count><Icon name="info" size={13} />0</Count>
          </Group>
          <Group $left={4}>
            <SearchBox $w={204}>
              <Bare placeholder="Search (Ctrl+Shift+F)" aria-label="Global search" />
              <Icon name="search" />
            </SearchBox>
          </Group>
        </ToolBar>
        <Main>
          <Column>
            <Explorer />
            <EventViewer />
            <Contextual />
          </Column>
          <Column>
            <Editor />
            <Transport />
          </Column>
          <Column>
            <Meter />
          </Column>
        </Main>
      </AppWindow>
      <Behind><BehindThumb /></Behind>
      <Taskbar>
        <TaskTip $x={25} $w={8} $h={2} $color="#9a8a78" />
        <TaskTip $x={36.4} $w={10} $h={2} $color="#4a3f3a" />
        <TaskTip $x={68.4} $w={8} $h={2} $color="#3c8c7a" />
        <TaskTip $x={71.7} $w={37} $h={4} $color="#fbf3e6" />
        <TaskTip $x={87.8} $w={11} $h={3} $color="#c23a36" />
      </Taskbar>
      <Pointer width="12" height="19" viewBox="0 0 12 19" aria-hidden="true">
        <path d="M.5.8v15.400l3.600-3.500 2.300 5.400 2.100-.9-2.300-5.300h5z" fill="#fff" stroke="#111" />
      </Pointer>
    </Screen>
  );
}
